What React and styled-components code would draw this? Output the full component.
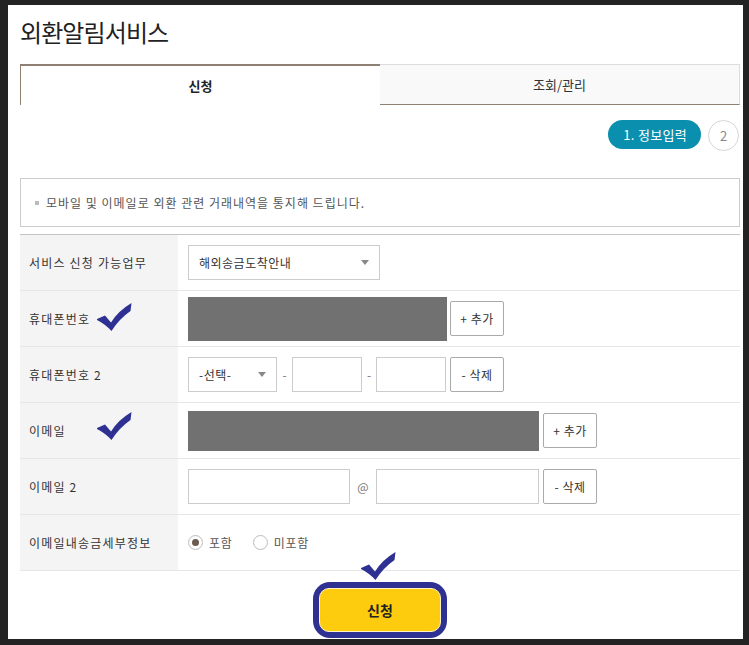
import React from "react";
import styled, { createGlobalStyle } from "styled-components";

const GlobalStyle = createGlobalStyle`
  html, body {
    margin: 0;
    padding: 0;
    background: #232323;
  }
  body {
    font-family: "Noto Sans CJK KR", "Noto Sans", sans-serif;
    color: #333;
  }
  * {
    box-sizing: border-box;
  }
`;

const Frame = styled.div`
  margin: 5px 6px 0 8px;
  height: 634px;
  overflow: hidden;
  background: #fff;
  padding: 0 3px 0 12px;
`;

const Title = styled.h1`
  margin: 0;
  height: 59px;
  padding-top: 12px;
  font-size: 24px;
  line-height: 30px;
  font-weight: 400;
  color: #222;
  letter-spacing: -0.9px;
`;

const Tabs = styled.div`
  display: grid;
  grid-template-columns: 360px 1fr;
  height: 41px;
`;

const Tab = styled.div`
  display: flex;
  align-items: center;
  justify-content: center;
  font-size: 13px;
  color: ${(p) => (p.active ? "#222" : "#333")};
  font-weight: ${(p) => (p.active ? 700 : 400)};
  background: ${(p) => (p.active ? "#fff" : "#f9f9f9")};
  border-top: ${(p) => (p.active ? "2px solid #8e8072" : "1px solid #ddd")};
  border-left: ${(p) => (p.active ? "1px solid #8e8072" : "none")};
  border-right: ${(p) => (p.active ? "none" : "1px solid #ddd")};
  border-bottom: ${(p) => (p.active ? "none" : "1px solid #8e8072")};
`;

const StepRow = styled.div`
  display: flex;
  justify-content: flex-end;
  align-items: flex-start;
  gap: 7px;
  height: 73px;
  padding: 15px 1px 0 0;
`;

const StepPill = styled.div`
  height: 29px;
  padding: 0 14px 0 15px;
  border-radius: 15px;
  background: #0a8fae;
  color: #fff;
  font-size: 13px;
  letter-spacing: 0.3px;
  display: flex;
  align-items: center;
`;

const StepCircle = styled.div`
  width: 31px;
  height: 31px;
  border-radius: 50%;
  border: 1px solid #d6d6d6;
  color: #888;
  font-size: 13px;
  display: flex;
  align-items: center;
  justify-content: center;
`;

const Notice = styled.div`
  height: 49px;
  border: 1px solid #ccc;
  padding: 0 14px;
  display: flex;
  align-items: center;
  gap: 7px;
  font-size: 12px;
  color: #555;
  letter-spacing: 1px;
`;

const Bullet = styled.span`
  width: 4px;
  height: 4px;
  background: #bbb;
  display: inline-block;
`;

const Table = styled.div`
  margin-top: 7px;
  border-top: 1px solid #c4c4c4;
`;

const Row = styled.div`
  display: grid;
  grid-template-columns: 158px 1fr;
  height: 56px;
  border-bottom: 1px solid #e6e6e6;
`;

const Label = styled.div`
  position: relative;
  background: #f4f4f4;
  display: flex;
  align-items: center;
  padding-left: 9px;
  font-size: 12px;
  color: #333;
  letter-spacing: 1.2px;
`;

const Value = styled.div`
  display: flex;
  align-items: center;
  padding-left: 10px;
`;

const SelectBox = styled.div`
  width: ${(p) => p.w}px;
  height: 35px;
  border: 1px solid #ccc;
  display: flex;
  align-items: center;
  justify-content: space-between;
  padding: 0 10px 0 10px;
  font-size: 12px;
  color: #333;
  letter-spacing: 0.5px;
  &::after {
    content: "";
    border-left: 4px solid transparent;
    border-right: 4px solid transparent;
    border-top: 5px solid #888;
  }
`;

const Redacted = styled.div`
  width: ${(p) => p.w}px;
  height: ${(p) => p.h}px;
  background: #717171;
`;

const Input = styled.div`
  width: ${(p) => p.w}px;
  height: 35px;
  border: 1px solid #ccc;
  background: #fff;
`;

const Sep = styled.span`
  width: ${(p) => p.w}px;
  text-align: center;
  font-size: 12px;
  color: #777;
`;

const SmallButton = styled.button`
  margin-left: ${(p) => p.gap || 4}px;
  width: 54px;
  height: 35px;
  border: 1px solid #aaa;
  border-radius: 2px;
  background: #fff;
  font-family: inherit;
  font-size: 12px;
  letter-spacing: 0.5px;
  color: #333;
  padding: 0;
`;

const RadioGroup = styled.div`
  display: flex;
  align-items: center;
  gap: 20px;
  font-size: 12px;
  letter-spacing: 0.8px;
  color: #555;
`;

const RadioItem = styled.label`
  display: flex;
  align-items: center;
  gap: 6px;
`;

const RadioDot = styled.span`
  width: 15px;
  height: 15px;
  border-radius: 50%;
  border: 1px solid #bbb;
  display: flex;
  align-items: center;
  justify-content: center;
  &::after {
    content: "";
    width: 7px;
    height: 7px;
    border-radius: 50%;
    background: ${(p) => (p.checked ? "#6b5a4e" : "transparent")};
  }
`;

const SubmitArea = styled.div`
  position: relative;
  display: flex;
  justify-content: center;
  padding-top: 11px;
`;

const SubmitRing = styled.div`
  padding: 6px;
  background: #2e3192;
  border-radius: 17px;
`;

const SubmitButton = styled.button`
  width: 122px;
  height: 44px;
  border: 1px solid #fff3c4;
  border-radius: 10px;
  background: #fecc0f;
  font-family: inherit;
  font-size: 14px;
  font-weight: 700;
  color: #222;
`;

const Check = styled.svg`
  position: absolute;
  width: 35px;
  height: 28px;
  left: ${(p) => p.left};
  top: ${(p) => p.top};
`;

const CheckMark = (props) => (
  <Check viewBox="0 0 35 28" {...props}>
    <path
      d="M0 16 L8 12.5 L14 19.5 Q21 8 34.5 0 L33.5 8 Q22 16 14.5 28 Q8 21 0 17 Z"
      fill="#2e3192"
    />
  </Check>
);

export default function App() {
  return (
    <>
      <GlobalStyle />
      <Frame>
        <Title>외환알림서비스</Title>
        <Tabs>
          <Tab active>신청</Tab>
          <Tab>조회/관리</Tab>
        </Tabs>
        <StepRow>
          <StepPill>1. 정보입력</StepPill>
          <StepCircle>2</StepCircle>
        </StepRow>
        <Notice>
          <Bullet />
          모바일 및 이메일로 외환 관련 거래내역을 통지해 드립니다.
        </Notice>
        <Table>
          <Row>
            <Label>서비스 신청 가능업무</Label>
            <Value>
              <SelectBox w={192}>해외송금도착안내</SelectBox>
            </Value>
          </Row>
          <Row>
            <Label>
              휴대폰번호
              <CheckMark left="77px" top="12px" />
            </Label>
            <Value>
              <Redacted w={259} h={44} />
              <SmallButton gap={3}>+ 추가</SmallButton>
            </Value>
          </Row>
          <Row>
            <Label>휴대폰번호 2</Label>
            <Value>
              <SelectBox w={89}>-선택-</SelectBox>
              <Sep w={15}>-</Sep>
              <Input w={70} />
              <Sep w={14}>-</Sep>
              <Input w={70} />
              <SmallButton>- 삭제</SmallButton>
            </Value>
          </Row>
          <Row>
            <Label>
              이메일
              <CheckMark left="77px" top="9px" />
            </Label>
            <Value>
              <Redacted w={351} h={40} />
              <SmallButton>+ 추가</SmallButton>
            </Value>
          </Row>
          <Row>
            <Label>이메일 2</Label>
            <Value>
              <Input w={162} />
              <Sep w={26}>@</Sep>
              <Input w={163} />
              <SmallButton>- 삭제</SmallButton>
            </Value>
          </Row>
          <Row>
            <Label>이메일내송금세부정보</Label>
            <Value>
              <RadioGroup>
                <RadioItem>
                  <RadioDot checked />
                  포함
                </RadioItem>
                <RadioItem>
                  <RadioDot />
                  미포함
                </RadioItem>
              </RadioGroup>
            </Value>
          </Row>
        </Table>
        <SubmitArea>
          <CheckMark left="calc(50% - 19px)" top="-19px" />
          <SubmitRing>
            <SubmitButton>신청</SubmitButton>
          </SubmitRing>
        </SubmitArea>
      </Frame>
    </>
  );
}
